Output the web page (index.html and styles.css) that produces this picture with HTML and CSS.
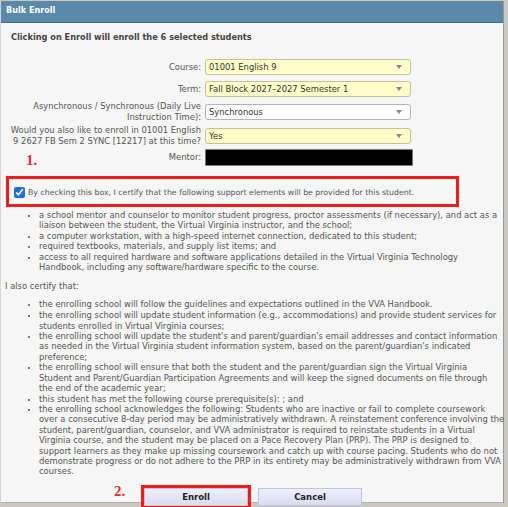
FILE: index.html
```html
<!DOCTYPE html>
<html>
<head>
<meta charset="utf-8">
<link rel="stylesheet" href="styles.css">
</head>
<body>
<div class="dialog">
  <div class="titlebar">Bulk Enroll</div>
  <div class="content">
    <p class="lead">Clicking on Enroll will enroll the 6 selected students</p>
    <div class="form">
      <div class="row r1">
        <div class="label">Course:</div>
        <div class="select yellow"><span>01001 English 9</span><i class="arrow"></i></div>
      </div>
      <div class="row r2">
        <div class="label">Term:</div>
        <div class="select yellow"><span>Fall Block 2027&ndash;2027 Semester 1</span><i class="arrow"></i></div>
      </div>
      <div class="row r3">
        <div class="label">Asynchronous / Synchronous (Daily Live<br>Instruction Time):</div>
        <div class="select"><span>Synchronous</span><i class="arrow"></i></div>
      </div>
      <div class="row r4">
        <div class="label">Would you also like to enroll in 01001 English<br>9 2627 FB Sem 2 SYNC [12217] at this time?</div>
        <div class="select yellow"><span>Yes</span><i class="arrow"></i></div>
      </div>
      <div class="row r5">
        <div class="label mentor-label"><span class="mark">1.</span><span>Mentor:</span></div>
        <div class="mentor"></div>
      </div>
    </div>
    <label class="certify">
      <input type="checkbox" checked>
      <span>By checking this box, I certify that the following support elements will be provided for this student.</span>
    </label>
    <ul class="list">
      <li>a school mentor and counselor to monitor student progress, proctor assessments (if necessary), and act as a<br>liaison between the student, the Virtual Virginia instructor, and the school;</li>
      <li>a computer workstation, with a high-speed internet connection, dedicated to this student;</li>
      <li>required textbooks, materials, and supply list items; and</li>
      <li>access to all required hardware and software applications detailed in the Virtual Virginia Technology<br>Handbook, including any software/hardware specific to the course.</li>
    </ul>
    <p class="also">I also certify that:</p>
    <ul class="list list2">
      <li class="first">the enrolling school will follow the guidelines and expectations outlined in the VVA Handbook.</li>
      <li>the enrolling school will update student information (e.g., accommodations) and provide student services for<br>students enrolled in Virtual Virginia courses;</li>
      <li>the enrolling school will update the student's and parent/guardian's email addresses and contact information<br>as needed in the Virtual Virginia student information system, based on the parent/guardian's indicated<br>preference;</li>
      <li>the enrolling school will ensure that both the student and the parent/guardian sign the Virtual Virginia<br>Student and Parent/Guardian Participation Agreements and will keep the signed documents on file through<br>the end of the academic year;</li>
      <li>this student has met the following course prerequisite(s): ; and</li>
      <li>the enrolling school acknowledges the following: Students who are inactive or fail to complete coursework<br>over a consecutive 8-day period may be administratively withdrawn. A reinstatement conference involving the<br>student, parent/guardian, counselor, and VVA administrator is required to reinstate students in a Virtual<br>Virginia course, and the student may be placed on a Pace Recovery Plan (PRP). The PRP is designed to<br>support learners as they make up missing coursework and catch up with course pacing. Students who do not<br>demonstrate progress or do not adhere to the PRP in its entirety may be administratively withdrawn from VVA<br>courses.</li>
    </ul>
    <div class="actions">
      <div class="enroll-wrap">
        <span class="mark mark2">2.</span>
        <button class="btn">Enroll</button>
      </div>
      <button class="btn">Cancel</button>
    </div>
  </div>
</div>
</body>
</html>
```

FILE: styles.css
```css
html, body {
  margin: 0;
  padding: 0;
}
body {
  background: #c9c8bd;
  font-family: "DejaVu Sans", Verdana, sans-serif;
  font-size: 8.4px;
  color: #555;
  width: 508px;
  height: 507px;
  overflow: hidden;
}
.dialog {
  margin-top: 1px;
  width: 504px;
  height: 502px;
  background: #f6f6f6;
  border-left: 1px solid #d6d6d6;
  border-right: 1px solid #9a9a9a;
  border-bottom: 1px solid #b0b0b0;
  box-sizing: border-box;
}
.titlebar {
  height: 21px;
  line-height: 19px;
  background: #5b89aa;
  border-bottom: 1px solid #3d6e92;
  color: #fff;
  font-weight: bold;
  font-size: 8.1px;
  padding-left: 5px;
}
.content {
  padding: 0 4px 0 3px;
}
.lead {
  margin: 0;
  padding: 9px 0 0 7px;
  line-height: 10px;
  font-weight: bold;
  font-size: 8.2px;
  color: #444;
}
.form {
  margin-top: 17px;
  display: flex;
  flex-direction: column;
}
.row {
  display: flex;
  align-items: center;
  column-gap: 4px;
}
.r1 { height: 16px; margin-bottom: 6px; }
.r2 { height: 16px; margin-bottom: 4px; }
.r3 { height: 21px; margin-bottom: 3px; }
.r4 { height: 21px; margin-bottom: 3px; }
.r5 { height: 17px; }
.label {
  width: 197px;
  text-align: right;
  line-height: 10.5px;
  white-space: nowrap;
}
.mentor-label {
  display: flex;
  justify-content: space-between;
  align-items: center;
  padding-left: 22px;
  box-sizing: border-box;
}
.mark {
  font-family: "Liberation Serif", "Times New Roman", serif;
  font-weight: bold;
  font-size: 15px;
  color: #e03030;
  line-height: 15px;
  margin-top: 6px;
}
.select {
  width: 206px;
  height: 16px;
  box-sizing: border-box;
  border: 1px solid #b4b4b4;
  border-radius: 3px;
  background: #fff;
  display: flex;
  align-items: center;
  justify-content: space-between;
  padding: 0 8px 0 3px;
  color: #333;
}
.select.yellow {
  background: #fefec9;
  border-color: #c3c3a0;
}
.arrow {
  width: 0;
  height: 0;
  border-left: 3px solid transparent;
  border-right: 3px solid transparent;
  border-top: 4px solid #888;
}
.mentor {
  width: 208px;
  height: 17px;
  box-sizing: border-box;
  background: #000;
  border: 1px solid #777;
  border-radius: 1px;
}
.certify {
  margin-top: 10px;
  display: flex;
  align-items: center;
  height: 31px;
  width: 453px;
  box-sizing: border-box;
  border: 3px solid #ee1c1c;
  margin-left: 2px;
  padding-left: 5px;
  color: #555;
  font-size: 7.8px;
}
.certify input {
  width: 11px;
  height: 11px;
  margin: 2px 3px 0 0;
  accent-color: #1f6fde;
}
.certify span {
  margin-top: 2px;
}
.list {
  margin: 3px 0 0 0;
  padding: 0 0 0 35px;
  list-style-type: square;
  line-height: 10.4px;
  white-space: nowrap;
}
.list li::marker {
  color: #777;
  font-size: 7px;
}
.also {
  margin: 9px 0 0 1px;
  line-height: 10.4px;
}
.list2 {
  margin-top: 7px;
}
.list2 .first {
  margin-bottom: 1px;
}
.actions {
  margin-top: 8px;
  display: flex;
  justify-content: center;
  align-items: center;
  column-gap: 7px;
}
.enroll-wrap {
  position: relative;
  border: 3px solid #ee1c1c;
  display: flex;
}
.mark2 {
  position: absolute;
  left: -30px;
  top: -4px;
  margin: 0;
}
.btn {
  width: 104px;
  height: 18px;
  margin: 0;
  padding: 0;
  border: 1px solid #c4c4d8;
  background: linear-gradient(#eeeefc, #dcdcf2);
  font-family: "DejaVu Sans", Verdana, sans-serif;
  font-size: 8.5px;
  font-weight: bold;
  color: #222;
}
```
